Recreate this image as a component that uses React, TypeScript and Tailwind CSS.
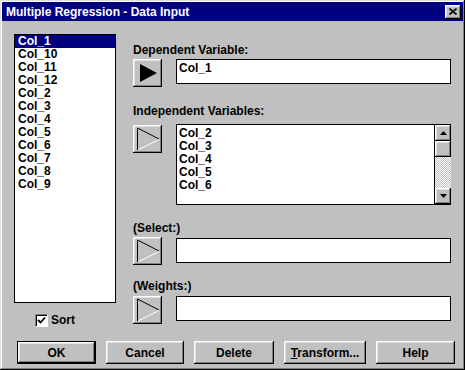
import React from 'react'

const raised =
  'bg-[#c0c0c0] shadow-[inset_-1px_-1px_0_#000,inset_1px_1px_0_#fff,inset_-2px_-2px_0_#808080,inset_2px_2px_0_#dfdfdf]'

const leftCols = ['Col_1', 'Col_10', 'Col_11', 'Col_12', 'Col_2', 'Col_3', 'Col_4', 'Col_5', 'Col_6', 'Col_7', 'Col_8', 'Col_9']
const indepCols = ['Col_2', 'Col_3', 'Col_4', 'Col_5', 'Col_6']

function ArrowButton({ filled }: { filled?: boolean }) {
  return (
    <div className={`flex h-[28px] w-[29px] shrink-0 items-center justify-center ${raised}`}>
      {filled ? (
        <svg width="20" height="20" viewBox="0 0 20 20">
          <polygon points="2,1 2,19 19,10" fill="#000" />
        </svg>
      ) : (
        <svg width="24" height="24" viewBox="0 0 24 24">
          <line x1="1.5" y1="1" x2="1.5" y2="23" stroke="#000" />
          <line x1="1.5" y1="1" x2="23" y2="12" stroke="#000" />
          <line x1="2" y1="23" x2="23" y2="12.5" stroke="#fff" />
        </svg>
      )}
    </div>
  )
}

function Label({ text, className }: { text: string; className?: string }) {
  return <div className={`h-[14px] text-[12px] font-bold leading-[14px] text-black ${className}`}>{text}</div>
}

function Field({ children, className }: { children?: React.ReactNode; className?: string }) {
  return (
    <div className={`h-[25px] w-[275px] border border-black bg-white px-[2px] pt-[1px] text-[12px] font-bold leading-[14px] ${className}`}>
      {children}
    </div>
  )
}

function ScrollArrow({ up }: { up?: boolean }) {
  return (
    <div className={`flex h-[16px] w-[16px] items-center justify-center ${raised}`}>
      <svg width="7" height="4" viewBox="0 0 7 4">
        <polygon points={up ? '3.5,0 7,4 0,4' : '0,0 7,0 3.5,4'} fill="#000" />
      </svg>
    </div>
  )
}

function DialogButton({ children, isDefault, width }: { children: React.ReactNode; isDefault?: boolean; width: string }) {
  return (
    <div className={`${width} h-[23px] ${isDefault ? 'border border-black' : ''}`}>
      <div className={`flex h-full w-full items-center justify-center text-[12px] font-bold ${raised}`}>
        {children}
      </div>
    </div>
  )
}

export default function App() {
  return (
    <div
      className="flex h-[370px] w-[465px] flex-col bg-[#c0c0c0] p-[2px] shadow-[inset_-1px_-1px_0_#000,inset_1px_1px_0_#dfdfdf,inset_-2px_-2px_0_#808080,inset_2px_2px_0_#fff]"
      style={{ fontFamily: '"Liberation Sans", Arial, sans-serif' }}
    >
      {/* title bar */}
      <div className="flex h-[19px] items-center justify-between bg-[#000080] pl-[4px] pr-[2px]">
        <span className="text-[12px] font-bold leading-none text-white">Multiple Regression - Data Input</span>
        <div className={`flex h-[14px] w-[16px] items-center justify-center ${raised}`}>
          <svg width="8" height="7" viewBox="0 0 8 7">
            <path d="M0.5 0.5 L7.5 6.5 M7.5 0.5 L0.5 6.5" stroke="#000" strokeWidth="1.6" />
          </svg>
        </div>
      </div>

      {/* body */}
      <div className="flex h-[320px] pl-[12px] pt-[13px]">
        {/* variable list */}
        <div className="flex w-[102px] flex-col">
          <div className="h-[269px] border border-black bg-white">
            {leftCols.map((c, i) => (
              <div
                key={c}
                className={`h-[13px] pl-[3px] text-[12px] font-bold leading-[13px] ${i === 0 ? 'bg-[#000080] text-white' : 'text-black'}`}
              >
                {c}
              </div>
            ))}
          </div>
          <div className="ml-[21px] mt-[10px] flex items-center gap-[3px]">
            <div className="flex h-[13px] w-[13px] items-center justify-center border border-t-[#808080] border-l-[#808080] border-b-white border-r-white bg-white shadow-[inset_1px_1px_0_#000]">
              <svg width="9" height="9" viewBox="0 0 9 9">
                <path d="M1 4 L3.5 6.5 L8 1.5" stroke="#000" strokeWidth="1.8" fill="none" />
              </svg>
            </div>
            <span className="text-[12px] font-bold leading-[14px]">Sort</span>
          </div>
        </div>

        {/* right column */}
        <div className="ml-[17px] flex flex-col">
          <Label text="Dependent Variable:" className="mt-[9px]" />
          <div className="mt-[2px] flex gap-[14px]">
            <ArrowButton filled />
            <Field>Col_1</Field>
          </div>

          <Label text="Independent Variables:" className="mt-[17px]" />
          <div className="mt-[6px] flex gap-[14px]">
            <div className="pt-[1px]">
              <ArrowButton />
            </div>
            <div className="flex h-[81px]">
              <div className="w-[259px] border border-black bg-white pl-[2px] pt-[2px]">
                {indepCols.map(c => (
                  <div key={c} className="h-[13px] text-[12px] font-bold leading-[13px]">
                    {c}
                  </div>
                ))}
              </div>
              <div className="flex w-[16px] flex-col border-y border-black">
                <ScrollArrow up />
                <div className={`h-[16px] w-[16px] ${raised}`} />
                <div className="flex-1 bg-[repeating-conic-gradient(#c0c0c0_0_25%,#fff_0_50%)] bg-[length:2px_2px]" />
                <ScrollArrow />
              </div>
            </div>
          </div>

          <Label text="(Select:)" className="mt-[16px]" />
          <div className="mt-[2px] flex gap-[14px]">
            <ArrowButton />
            <Field className="mt-[1px]" />
          </div>

          <Label text="(Weights:)" className="mt-[14px]" />
          <div className="mt-[3px] flex gap-[14px]">
            <ArrowButton />
            <Field />
          </div>
        </div>
      </div>

      {/* buttons */}
      <div className="flex gap-[10px] pl-[15px]">
        <DialogButton isDefault width="w-[79px]">OK</DialogButton>
        <DialogButton width="w-[78px]">Cancel</DialogButton>
        <DialogButton width="w-[80px]">Delete</DialogButton>
        <DialogButton width="w-[82px]">
          <span>
            <span className="underline">T</span>ransform...
          </span>
        </DialogButton>
        <DialogButton width="w-[79px]">Help</DialogButton>
      </div>
    </div>
  )
}
